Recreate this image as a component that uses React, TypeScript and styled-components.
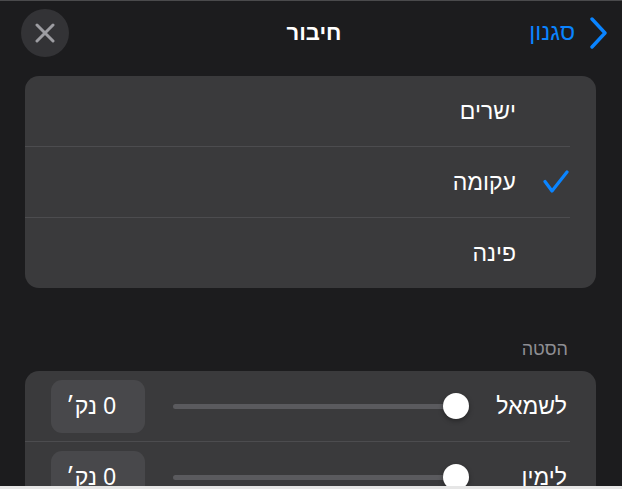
import React from "react";
import styled, { createGlobalStyle } from "styled-components";

const GlobalStyle = createGlobalStyle`
  html, body { margin: 0; padding: 0; background: #e6e6e6; }
  body { font-family: "Liberation Sans", "DejaVu Sans", sans-serif; }
  * { box-sizing: border-box; }
`;

const Panel = styled.div`
  width: 622px;
  height: 486px;
  background: #1c1c1e;
  border-top: 1px solid #4a4a4c;
  direction: rtl;
  overflow: hidden;
  color: #fff;
`;

const Header = styled.header`
  height: 63px;
  display: grid;
  grid-template-columns: 1fr auto 1fr;
  align-items: center;
  padding: 0 15px 0 21px;
`;

const BackButton = styled.button`
  justify-self: start;
  display: flex;
  align-items: center;
  gap: 14px;
  background: none;
  border: none;
  padding: 0;
  color: #0a84ff;
  font-family: inherit;
  font-size: 23px;
  direction: rtl;
`;

const Title = styled.h1`
  margin: 0;
  font-size: 22px;
  font-weight: 700;
  color: #fff;
`;

const CloseButton = styled.button`
  justify-self: end;
  width: 48px;
  height: 48px;
  border-radius: 50%;
  border: none;
  background: #333336;
  display: flex;
  align-items: center;
  justify-content: center;
  padding: 0;
`;

const Card = styled.div<{ $top: number }>`
  margin: ${(p) => p.$top}px 26px 0 25px;
  background: #3a3a3c;
  border-radius: 14px;
  overflow: hidden;
`;

const Separator = styled.div`
  height: 1px;
  background: #4c4c4f;
  margin-right: 26px;
`;

const OptionRow = styled.div`
  height: 70px;
  display: flex;
  align-items: center;
  padding-right: 27px;
`;

const CheckSlot = styled.div`
  width: 53px;
  display: flex;
  align-items: center;
  justify-content: flex-start;
`;

const OptionLabel = styled.span`
  font-size: 23px;
  color: #fff;
`;

const SectionTitle = styled.div`
  margin: 51px 54px 0 0;
  height: 20px;
  line-height: 20px;
  font-size: 18px;
  color: #8e8e93;
`;

const SliderRow = styled.div`
  height: 70px;
  display: flex;
  align-items: center;
  gap: 28px;
  padding: 0 29px 0 26px;
`;

const SliderLabel = styled.span`
  width: 70px;
  flex: none;
  font-size: 23px;
  color: #fff;
  white-space: nowrap;
`;

const Track = styled.div`
  flex: 1;
  height: 5px;
  border-radius: 3px;
  background: #5a5a5e;
  position: relative;
`;

const Thumb = styled.div`
  position: absolute;
  right: 0;
  top: 50%;
  width: 26px;
  height: 26px;
  margin-top: -13px;
  border-radius: 50%;
  background: #fff;
  box-shadow: 0 2px 5px rgba(0, 0, 0, 0.35);
`;

const ValueBox = styled.div`
  width: 94px;
  height: 53px;
  flex: none;
  border-radius: 11px;
  background: #48484b;
  display: flex;
  align-items: center;
  justify-content: center;
  padding-right: 14px;
  font-size: 23px;
  color: #fff;
`;

const Chevron = () => (
  <svg width="18" height="32" viewBox="0 0 18 32" fill="none">
    <path d="M3 2 L16 16 L3 30" stroke="#0a84ff" strokeWidth="3.4" strokeLinecap="round" strokeLinejoin="round" />
  </svg>
);

const XIcon = () => (
  <svg width="20" height="20" viewBox="0 0 20 20" fill="none">
    <path d="M2 2 L18 18 M18 2 L2 18" stroke="#9d9da2" strokeWidth="3" strokeLinecap="round" />
  </svg>
);

const Check = () => (
  <svg width="26" height="24" viewBox="0 0 26 24" fill="none">
    <path d="M2 11.5 L9 21 L24 2" stroke="#0a84ff" strokeWidth="3.2" strokeLinecap="round" strokeLinejoin="round" />
  </svg>
);

const options = [
  { label: "ישרים", checked: false },
  { label: "עקומה", checked: true },
  { label: "פינה", checked: false },
];

const sliders = ["לשמאל", "לימין"];

export default function App() {
  return (
    <>
      <GlobalStyle />
      <Panel>
        <Header>
          <BackButton>
            <Chevron />
            <span>סגנון</span>
          </BackButton>
          <Title>חיבור</Title>
          <CloseButton aria-label="סגור">
            <XIcon />
          </CloseButton>
        </Header>

        <Card $top={12}>
          {options.map((o, i) => (
            <React.Fragment key={o.label}>
              {i > 0 && <Separator />}
              <OptionRow>
                <CheckSlot>{o.checked && <Check />}</CheckSlot>
                <OptionLabel>{o.label}</OptionLabel>
              </OptionRow>
            </React.Fragment>
          ))}
        </Card>

        <SectionTitle>הסטה</SectionTitle>

        <Card $top={12}>
          {sliders.map((s, i) => (
            <React.Fragment key={s}>
              {i > 0 && <Separator />}
              <SliderRow>
                <SliderLabel>{s}</SliderLabel>
                <Track>
                  <Thumb />
                </Track>
                <ValueBox>0 נק׳</ValueBox>
              </SliderRow>
            </React.Fragment>
          ))}
        </Card>
      </Panel>
    </>
  );
}
